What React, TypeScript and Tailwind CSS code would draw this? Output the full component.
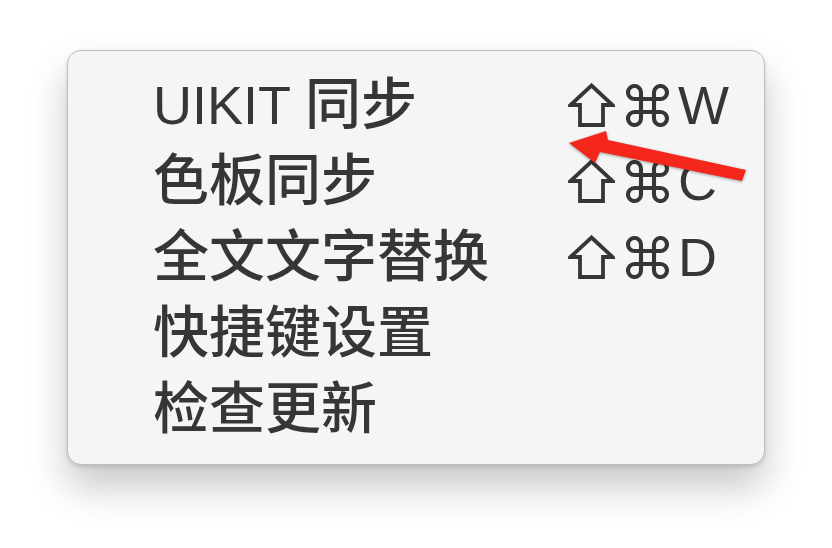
import React from "react";

const items: { latin?: string; label: string; key?: string }[] = [
  { latin: "UIKIT ", label: "同步", key: "W" },
  { label: "色板同步", key: "C" },
  { label: "全文文字替换", key: "D" },
  { label: "快捷键设置" },
  { label: "检查更新" },
];

function ShiftIcon() {
  return (
    <svg width="47" height="44" viewBox="0 0 47 44" fill="none" stroke="#363636" strokeWidth="3.8" strokeLinejoin="miter">
      <path d="M23.5 2.5 L44.5 22 L35 22 L35 42 L12 42 L12 22 L2.5 22 Z" />
    </svg>
  );
}

function CmdIcon() {
  return (
    <svg width="43" height="43" viewBox="2.075 2.075 19.85 19.85" fill="none" stroke="#363636" strokeWidth="1.9" strokeLinecap="round" strokeLinejoin="round">
      <path d="M15 6v12a3 3 0 1 0 3-3H6a3 3 0 1 0 3 3V6a3 3 0 1 0-3 3h12a3 3 0 1 0-3-3" />
    </svg>
  );
}

export default function App() {
  return (
    <div className="relative w-[832px] h-[548px] bg-white overflow-hidden pl-[67px] pt-[50px]">
      <div
        className="w-[698px] h-[415px] rounded-[14px] bg-[#f5f5f5] border border-[#bdbdbd] shadow-[0_22px_38px_rgba(0,0,0,0.22),0_2px_4px_rgba(0,0,0,0.12)] pl-[85px] pt-[16px] text-[#363636] text-[56px] leading-[76px]"
        style={{ fontFamily: '"Liberation Sans", "Noto Sans CJK SC", sans-serif' }}
      >
        {items.map((it) => (
          <div key={it.label} className="flex items-center h-[76px]">
            <div className="w-[415px] whitespace-nowrap font-medium">
              {it.latin && <span className="text-[54px] font-normal">{it.latin}</span>}
              {it.label}
            </div>
            {it.key && (
              <div className="flex items-center text-[54px]">
                <ShiftIcon />
                <div className="w-[11px]" />
                <CmdIcon />
                <div className="w-[9px]" />
                <span>{it.key}</span>
              </div>
            )}
          </div>
        ))}
      </div>
      <svg
        className="absolute left-0 top-0 pointer-events-none"
        width="832"
        height="548"
        style={{ filter: "drop-shadow(0 1px 1.5px rgba(0,0,0,0.35))" }}
      >
        <polygon
          points="569,143 606,131 608,140 746,170 742,181 600,152 595,163"
          fill="#f5261b"
        />
      </svg>
    </div>
  );
}
